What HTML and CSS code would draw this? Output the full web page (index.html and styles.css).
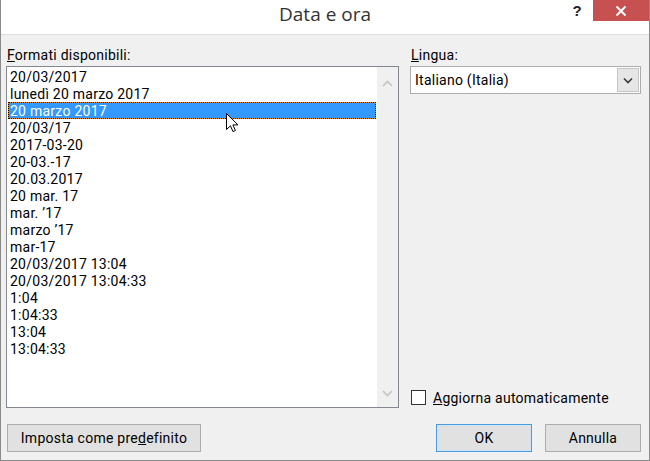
FILE: index.html
```html
<!DOCTYPE html>
<html lang="it">
<head>
<meta charset="utf-8">
<title>Data e ora</title>
<link rel="stylesheet" href="styles.css">
</head>
<body>
<div class="window">
  <div class="titlebar">
    <div class="tb-side"></div>
    <div class="title">Data e ora</div>
    <div class="tb-side tb-controls">
      <span class="help">?</span>
      <span class="close">
        <svg width="12" height="12" viewBox="0 0 12 12"><path d="M1.5 1.5 L10.5 10.5 M10.5 1.5 L1.5 10.5" stroke="#fff" stroke-width="2" fill="none"/></svg>
      </span>
    </div>
  </div>
  <div class="content">
    <div class="main">
      <div class="left">
        <div class="lbl"><u>F</u>ormati disponibili:</div>
        <div class="listbox">
          <ul class="items">
            <li>20/03/2017</li>
            <li>lunedì 20 marzo 2017</li>
            <li class="sel">20 marzo 2017</li>
            <li>20/03/17</li>
            <li>2017-03-20</li>
            <li>20-03.-17</li>
            <li>20.03.2017</li>
            <li>20 mar. 17</li>
            <li>mar. ’17</li>
            <li>marzo ’17</li>
            <li>mar-17</li>
            <li>20/03/2017 13:04</li>
            <li>20/03/2017 13:04:33</li>
            <li>1:04</li>
            <li>1:04:33</li>
            <li>13:04</li>
            <li>13:04:33</li>
          </ul>
          <div class="scrollbar">
            <svg class="sb-arrow" width="11" height="7" viewBox="0 0 11 7"><path d="M1 6 L5.5 1.5 L10 6" stroke="#c4c4c4" stroke-width="1.6" fill="none"/></svg>
            <svg class="sb-arrow" width="11" height="7" viewBox="0 0 11 7"><path d="M1 1 L5.5 5.5 L10 1" stroke="#c4c4c4" stroke-width="1.6" fill="none"/></svg>
          </div>
          <svg class="cursor" width="13" height="20" viewBox="0 0 13 20"><path d="M0.5 0.5 L0.5 16.5 L4.4 12.8 L7 18.6 L9.4 17.5 L6.9 11.9 L12 11.9 Z" fill="#fff" stroke="#000" stroke-width="1" stroke-linejoin="miter"/></svg>
        </div>
      </div>
      <div class="right">
        <div class="lbl"><u>L</u>ingua:</div>
        <div class="combo">
          <span class="combo-text">Italiano (Italia)</span>
          <span class="combo-btn">
            <svg width="10" height="7" viewBox="0 0 10 7"><path d="M1 1.5 L5 5.5 L9 1.5" stroke="#3c3c3c" stroke-width="1.7" fill="none"/></svg>
          </span>
        </div>
        <label class="check">
          <span class="box"></span>
          <span><u>A</u>ggiorna automaticamente</span>
        </label>
      </div>
    </div>
    <div class="buttons">
      <button class="btn btn-wide">Imposta come pre<u>d</u>efinito</button>
      <div class="btn-group">
        <button class="btn btn-default">OK</button>
        <button class="btn">Annulla</button>
      </div>
    </div>
  </div>
</div>
</body>
</html>
```

FILE: styles.css
```css
* { box-sizing: border-box; }
html, body { margin: 0; padding: 0; }
body {
  width: 650px;
  height: 461px;
  font-family: Roboto, "Noto Sans", sans-serif;
  font-size: 14px;
  letter-spacing: 0.25px;
  color: #000;
  background: #fff;
}
.window {
  width: 650px;
  height: 461px;
  border: 1px solid #8a8a8a;
  border-top: none;
  background: #f0f0f0;
  display: flex;
  flex-direction: column;
}
.titlebar {
  height: 35px;
  background: #fff;
  border-bottom: 1px solid #dedede;
  display: grid;
  grid-template-columns: 1fr auto 1fr;
  align-items: start;
}
.title {
  font-family: "Open Sans", "Noto Sans", sans-serif;
  font-size: 19px;
  letter-spacing: 0;
  color: #333;
  line-height: 24px;
  padding-top: 2px;
}
.tb-controls {
  display: flex;
  justify-content: flex-end;
  align-items: flex-start;
}
.help {
  font-family: "Liberation Sans", sans-serif;
  font-weight: bold;
  font-size: 15px;
  line-height: 16px;
  margin-top: 3px;
  margin-right: 11px;
  color: #222;
}
.close {
  width: 56px;
  height: 21px;
  background: #c75050;
  display: flex;
  align-items: center;
  justify-content: center;
}
.content {
  flex: 1;
  padding: 11px 8px 8px 5px;
  display: flex;
  flex-direction: column;
}
.main {
  flex: 1;
  display: flex;
  gap: 11px;
}
.left {
  width: 393px;
  display: flex;
  flex-direction: column;
}
.lbl {
  line-height: 17px;
  height: 20px;
  padding-left: 1px;
  padding-top: 1px;
  color: #000;
}
.listbox {
  position: relative;
  height: 342px;
  border: 1px solid #828790;
  background: #fff;
  display: flex;
}
.items {
  list-style: none;
  margin: 0;
  padding: 1px 1px 0 1px;
  flex: 1;
}
.items li {
  height: 17px;
  line-height: 17px;
  padding-left: 2px;
  padding-top: 1px;
  white-space: nowrap;
}
.items li.sel {
  background: #3399ff;
  color: #fff;
  box-shadow: inset 0 0 0 1px #e08a20;
  outline: 1px dotted #000;
  outline-offset: -1px;
}
.scrollbar {
  width: 21px;
  background: #f0f0f0;
  display: flex;
  flex-direction: column;
  justify-content: space-between;
  align-items: center;
  padding: 13px 0 10px;
}
.cursor {
  position: absolute;
  left: 219px;
  top: 46px;
}
.right {
  flex: 1;
  display: flex;
  flex-direction: column;
}
.combo {
  height: 28px;
  border: 1px solid #abadb3;
  background: #fff;
  display: flex;
  align-items: stretch;
}
.combo-text {
  flex: 1;
  line-height: 26px;
  padding-left: 4px;
}
.combo-btn {
  width: 22px;
  margin: 1px;
  background: #e6e6e6;
  border: 1px solid #c4c4c4;
  display: flex;
  align-items: center;
  justify-content: center;
}
.check {
  margin-top: auto;
  display: flex;
  align-items: center;
  gap: 7px;
  height: 17px;
  margin-bottom: 3px;
  padding-left: 1px;
}
.box {
  width: 15px;
  height: 15px;
  border: 1px solid #333;
  background: #fff;
}
.buttons {
  margin-top: 15px;
  display: flex;
  justify-content: space-between;
  align-items: center;
  padding-left: 1px;
}
.btn-group {
  display: flex;
  gap: 13px;
}
.btn {
  height: 28px;
  width: 96px;
  font-family: inherit;
  font-size: 14px;
  letter-spacing: 0.25px;
  color: #000;
  background: #e1e1e1;
  border: 1px solid #adadad;
  padding: 0;
}
.btn-wide { width: 194px; }
.btn-default {
  border-color: #4a9be0;
  box-shadow: inset 0 0 0 1px #cfe4f7;
}
```
